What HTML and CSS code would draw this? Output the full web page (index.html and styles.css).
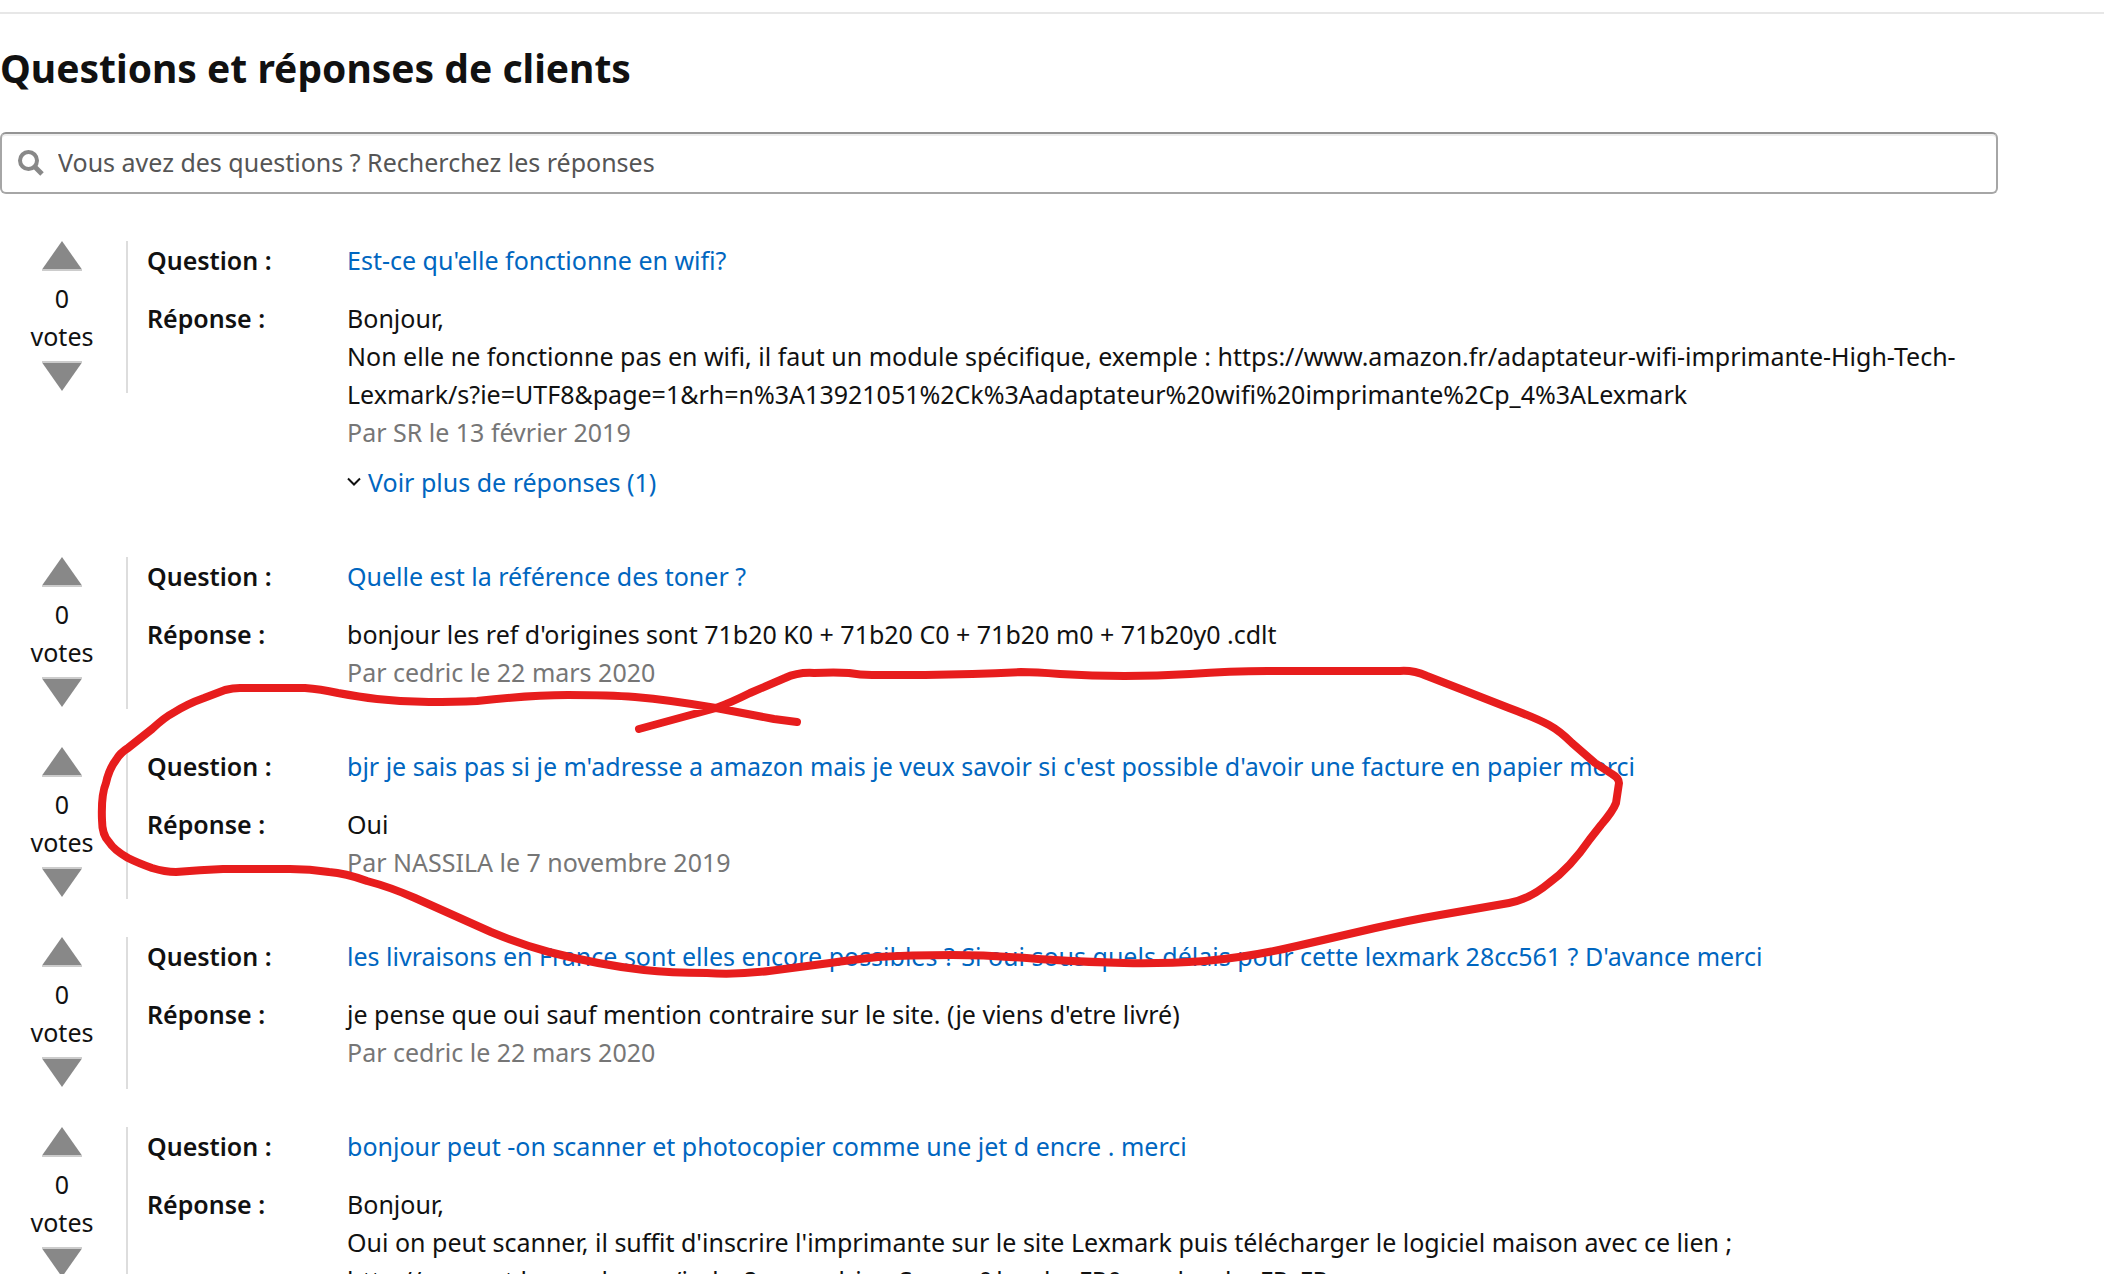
FILE: index.html
```html
<!DOCTYPE html>
<html lang="fr">
<head>
<meta charset="utf-8">
<title>Questions et réponses de clients</title>
<link rel="stylesheet" href="styles.css">
</head>
<body>
<svg class="sprite" aria-hidden="true">
  <symbol id="up" viewBox="0 0 40 30"><path d="M20 0 40 28.500H0Z" fill="#888"/><path d="M0 29h40" stroke="#ccc" stroke-width="2"/></symbol>
  <symbol id="down" viewBox="0 0 40 30"><path d="M0 1.500H40L20 30Z" fill="#888"/><path d="M0 1h40" stroke="#ccc" stroke-width="2"/></symbol>
</svg>
<main class="page">
  <h1 class="title">Questions et réponses de clients</h1>
  <form class="search">
    <svg class="search-icon" viewBox="0 0 26 26" aria-hidden="true"><circle cx="10.500" cy="10.500" r="8.500" fill="none" stroke="#888" stroke-width="4"/><path d="M16.500 16.500 24 24" stroke="#888" stroke-width="5"/></svg>
    <input class="search-input" type="text" aria-label="Rechercher les réponses" placeholder="Vous avez des questions ? Recherchez les réponses">
  </form>

  <article class="item">
    <div class="votes">
      <button class="vote vote-up" aria-label="Voter pour"><svg class="arrow"><use href="#up"/></svg></button>
      <span>0</span><span>votes</span>
      <button class="vote vote-down" aria-label="Voter contre"><svg class="arrow"><use href="#down"/></svg></button>
    </div>
    <dl class="qa">
      <dt>Question :</dt>
      <dd><a class="link" href="#">Est-ce qu'elle fonctionne en wifi?</a></dd>
      <dt>Réponse :</dt>
      <dd>Bonjour,<br>Non elle ne fonctionne pas en wifi, il faut un module spécifique, exemple : https://www.amazon.fr/adaptateur-wifi-imprimante-High-Tech-<wbr>Lexmark/s?ie=UTF8&amp;page=1&amp;rh=n%3A13921051%2Ck%3Aadaptateur%20wifi%20imprimante%2Cp_4%3ALexmark
        <p class="author">Par SR le 13 février 2019</p>
        <p class="more"><svg class="chevron" viewBox="0 0 14 10" aria-hidden="true"><path d="M1 1.500 7 7.500 13 1.500" fill="none" stroke="#111" stroke-width="2"/></svg><a class="link" href="#">Voir plus de réponses (1)</a></p>
      </dd>
    </dl>
  </article>

  <article class="item">
    <div class="votes">
      <button class="vote vote-up" aria-label="Voter pour"><svg class="arrow"><use href="#up"/></svg></button>
      <span>0</span><span>votes</span>
      <button class="vote vote-down" aria-label="Voter contre"><svg class="arrow"><use href="#down"/></svg></button>
    </div>
    <dl class="qa">
      <dt>Question :</dt>
      <dd><a class="link" href="#">Quelle est la référence des toner ?</a></dd>
      <dt>Réponse :</dt>
      <dd>bonjour les ref d'origines sont 71b20 K0 + 71b20 C0 + 71b20 m0 + 71b20y0 .cdlt
        <p class="author">Par cedric le 22 mars 2020</p>
      </dd>
    </dl>
  </article>

  <article class="item">
    <div class="votes">
      <button class="vote vote-up" aria-label="Voter pour"><svg class="arrow"><use href="#up"/></svg></button>
      <span>0</span><span>votes</span>
      <button class="vote vote-down" aria-label="Voter contre"><svg class="arrow"><use href="#down"/></svg></button>
    </div>
    <dl class="qa">
      <dt>Question :</dt>
      <dd><a class="link" href="#">bjr je sais pas si je m'adresse a amazon mais je veux savoir si c'est possible d'avoir une facture en papier merci</a></dd>
      <dt>Réponse :</dt>
      <dd>Oui
        <p class="author">Par NASSILA le 7 novembre 2019</p>
      </dd>
    </dl>
  </article>

  <article class="item">
    <div class="votes">
      <button class="vote vote-up" aria-label="Voter pour"><svg class="arrow"><use href="#up"/></svg></button>
      <span>0</span><span>votes</span>
      <button class="vote vote-down" aria-label="Voter contre"><svg class="arrow"><use href="#down"/></svg></button>
    </div>
    <dl class="qa">
      <dt>Question :</dt>
      <dd><a class="link" href="#">les livraisons en France sont elles encore possibles ? Si oui sous quels délais pour cette lexmark 28cc561 ? D'avance merci</a></dd>
      <dt>Réponse :</dt>
      <dd>je pense que oui sauf mention contraire sur le site. (je viens d'etre livré)
        <p class="author">Par cedric le 22 mars 2020</p>
      </dd>
    </dl>
  </article>

  <article class="item">
    <div class="votes">
      <button class="vote vote-up" aria-label="Voter pour"><svg class="arrow"><use href="#up"/></svg></button>
      <span>0</span><span>votes</span>
      <button class="vote vote-down" aria-label="Voter contre"><svg class="arrow"><use href="#down"/></svg></button>
    </div>
    <dl class="qa">
      <dt>Question :</dt>
      <dd><a class="link" href="#">bonjour peut -on scanner et photocopier comme une jet d encre . merci</a></dd>
      <dt>Réponse :</dt>
      <dd>Bonjour,<br>Oui on peut scanner, il suffit d'inscrire l'imprimante sur le site Lexmark puis télécharger le logiciel maison avec ce lien ;<br>http://support.lexmark.com/index?page=driverScreen&amp;locale=FR&amp;userlocale=FR_FR</dd>
    </dl>
  </article>

  <svg class="marker" width="1640" height="1000" viewBox="0 0 1640 1000" aria-hidden="true">
    <path d="M639 729 716 708Q732 702 750 693L785 678Q798 672 814 673Q835 672 849 673 860 675 872 675L925 675Q975 674 1021 672 1035 672 1060 674 1124 678 1190 674 1230 671 1268 671L1400 671Q1413 670 1427 676L1463 690 1509 708Q1536 718 1549 725 1560 731 1572 743L1595 763 1612 774Q1619 778 1619 783L1616 803Q1613 811 1601 825L1590 839Q1570 868 1549 883 1530 899 1509 903L1440 915Q1411 920 1375 928L1297 946Q1250 957 1205 961 1160 964 1124 963 1080 962 1038 959 990 955 952 955 910 955 878 957 850 960 830 963L769 971Q735 975 707 973 670 973 644 970 600 965 549 952 520 944 491 932L415 898Q390 887 367 881 345 873 329 872 310 869 290 869L223 869Q200 870 176 872 165 872 152 868 138 863 128 858 114 850 109 842 102 835 102 820 101 795 106 783 109 769 116 760 120 753 128 748L152 729Q165 717 173 713 187 704 204 698L225 690Q233 688 240 688L305 688Q320 689 338 693 360 697 377 699 403 702 429 702 455 702 477 701 530 695 568 695 610 695 635 697 670 700 716 708L774 719 797 722"/>
  </svg>
</main>
</body>
</html>
```
FILE: styles.css
```css
* { box-sizing: border-box; }
html { overflow: hidden; }
body { margin: 0; background: #fff; color: #111; font: 25px/38px "Noto Sans", sans-serif; }
.sprite { position: absolute; width: 0; height: 0; }
.page { position: relative; margin-top: 12px; border-top: 2px solid #e7e7e7; padding-right: 106px; }
.title { margin: 0; padding: 26px 0 36px; font-size: 39px; line-height: 56px; font-weight: 700; }
.search { display: flex; align-items: center; gap: 14px; height: 62px; margin-bottom: 47px; padding-left: 16px; border: 2px solid #a6a6a6; border-top-color: #949494; border-radius: 6px; box-shadow: inset 0 2px 0 #eee; }
.search-icon { width: 26px; height: 26px; flex: none; }
.search-input { flex: 1; height: 38px; padding: 0 0 2px; border: 0; outline: 0; background: none; font: inherit; color: #111; }
.search-input::placeholder { color: #555; opacity: 1; }
.item { display: flex; margin-bottom: 38px; }
.votes { display: flex; flex-direction: column; align-items: center; width: 128px; height: 152px; padding-right: 2px; border-right: 2px solid #ddd; flex: none; }
.vote { display: block; width: 40px; height: 30px; padding: 0; border: 0; background: none; }
.vote-up { margin-bottom: 8px; }
.vote-down { margin-top: 6px; }
.arrow { display: block; width: 40px; height: 30px; }
.qa { display: grid; grid-template-columns: 200px 1fr; row-gap: 20px; align-content: start; flex: 1; margin: 0; padding-left: 19px; }
.qa dt { font-weight: 600; }
.qa dd { margin: 0; }
.link { color: #0066c0; text-decoration: none; }
.author { margin: 0; color: #767676; }
.more { display: flex; align-items: center; gap: 7px; margin: 12px 0 18px; }
.chevron { width: 14px; height: 10px; }
.marker { position: absolute; left: 0; top: -14px; fill: none; stroke: #e71d1d; stroke-width: 8; stroke-linecap: round; stroke-linejoin: round; pointer-events: none; }
```
